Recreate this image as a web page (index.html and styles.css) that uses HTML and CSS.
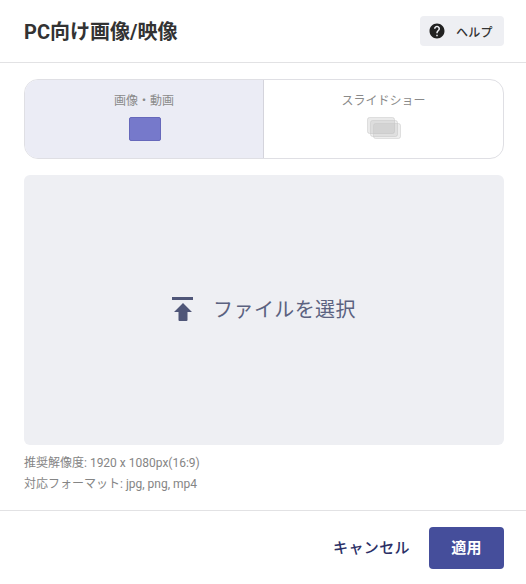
FILE: index.html
```html
<!DOCTYPE html>
<html lang="ja">
<head>
  <meta charset="UTF-8">
  <title>PC向け画像/映像</title>
  <link rel="stylesheet" href="styles.css">
</head>
<body>
  <div class="modal">
    <!-- Header -->
    <div class="modal-header">
      <h1>PC向け画像/映像</h1>
      <button class="help-button">
        <svg class="help-icon" viewBox="0 0 24 24" width="18" height="18">
          <path fill="#212121" d="M12 2C6.48 2 2 6.48 2 12s4.48 10 10 10 10-4.48 10-10S17.52 2 12 2zm1 17h-2v-2h2v2zm2.07-7.75l-.9.92C13.45 12.9 13 13.5 13 15h-2v-.5c0-1.1.45-2.1 1.17-2.83l1.24-1.26c.37-.36.59-.86.59-1.41 0-1.1-.9-2-2-2s-2 .9-2 2H8c0-2.21 1.79-4 4-4s4 1.79 4 4c0 .88-.36 1.68-.93 2.25z"/>
        </svg>
        <span>ヘルプ</span>
      </button>
    </div>

    <!-- Body -->
    <div class="modal-body">
      <div class="type-tabs">
        <div class="type-tab active">
          <span class="tab-label">画像・動画</span>
          <span class="single-icon"></span>
        </div>
        <div class="type-tab">
          <span class="tab-label">スライドショー</span>
          <svg class="slide-icon" viewBox="0 0 36 24" width="36" height="24">
            <rect x="1.500" y="0.500" width="27" height="16" rx="2" fill="#b8b8b8" fill-opacity="0.3" stroke="#c8c8c8" stroke-opacity="0.5"/>
            <rect x="4.500" y="3.500" width="27" height="16" rx="2" fill="#b8b8b8" fill-opacity="0.25" stroke="#c8c8c8" stroke-opacity="0.5"/>
            <rect x="7.500" y="6.500" width="27" height="15" rx="2" fill="#b8b8b8" fill-opacity="0.25" stroke="#c8c8c8" stroke-opacity="0.5"/>
          </svg>
        </div>
      </div>

      <div class="file-drop">
        <svg class="upload-icon" viewBox="0 0 21 25" width="21" height="25">
          <rect x="0" y="0" width="21" height="3" fill="#4f5678"/>
          <path fill="#4f5678" d="M11 6 L20 15 H15.500 V23 Q15.500 24 14.500 24 H7.500 Q6.500 24 6.500 23 V15 H2 Z"/>
        </svg>
        <span class="file-label">ファイルを選択</span>
      </div>

      <p class="note">推奨解像度: 1920 x 1080px(16:9)</p>
      <p class="note">対応フォーマット: jpg, png, mp4</p>
    </div>

    <!-- Footer -->
    <div class="modal-footer">
      <button class="cancel-button">キャンセル</button>
      <button class="apply-button">適用</button>
    </div>
  </div>
</body>
</html>
```

FILE: styles.css
```css
/* Modal layout */
body {
  margin: 0;
  background-color: #ffffff;
  font-family: Roboto, "Noto Sans CJK JP", sans-serif;
}

.modal {
  width: 526px;
  height: 584px;
  display: flex;
  flex-direction: column;
  box-sizing: border-box;
}

.modal-header {
  height: 63px;
  box-sizing: border-box;
  padding: 0 22px 0 24px;
  display: flex;
  align-items: center;
  justify-content: space-between;
  border-bottom: 1px solid #e2e2e4;
}

h1 {
  margin: 0 0 2px;
  font-size: 20px;
  font-weight: 700;
  color: #333333;
}

button {
  border: none;
  font-family: inherit;
  cursor: pointer;
}

.help-button {
  width: 84px;
  height: 30px;
  padding: 0 0 0 8px;
  display: flex;
  align-items: center;
  gap: 10px;
  background-color: #eeeff3;
  border-radius: 4px;
  font-size: 12px;
  font-weight: 500;
  letter-spacing: 0.3px;
  color: #333333;
}

.modal-body {
  flex: 1;
  padding: 16px 22px 0 24px;
}

/* Type selector */
.type-tabs {
  display: flex;
  height: 80px;
  box-sizing: border-box;
  border: 1px solid #dfdfe4;
  border-radius: 14px;
  overflow: hidden;
}

.type-tab {
  flex: 1;
  display: flex;
  flex-direction: column;
  align-items: center;
  padding-top: 13px;
  box-sizing: border-box;
}

.type-tab.active {
  flex: 0 0 239px;
  background-color: #ebecf5;
  border-right: 1px solid #d4d4dc;
}

.tab-label {
  font-size: 12px;
  line-height: 17px;
  color: #8a8a8a;
}

.single-icon {
  width: 32px;
  height: 24px;
  margin: 7px 0 0 2px;
  box-sizing: border-box;
  background-color: #7679cb;
  border: 1px solid #6668bb;
  border-radius: 2px;
}

.slide-icon {
  margin-top: 7px;
}

/* File picker */
.file-drop {
  height: 270px;
  margin: 16px 0 10px;
  box-sizing: border-box;
  display: flex;
  align-items: center;
  justify-content: center;
  gap: 20px;
  background-color: #eeeff3;
  border-radius: 6px;
}

.upload-icon {
  margin-bottom: 2px;
}

.file-label {
  margin-bottom: 4px;
  font-size: 20px;
  letter-spacing: 0.4px;
  color: #5b6280;
}

.note {
  margin: 0 0 5px;
  font-size: 12px;
  line-height: 16px;
  color: #858585;
}

/* Footer */
.modal-footer {
  height: 74px;
  box-sizing: border-box;
  padding: 0 22px 0 0;
  display: flex;
  align-items: center;
  justify-content: flex-end;
  gap: 19px;
  border-top: 1px solid #e2e2e4;
}

.cancel-button {
  background: none;
  padding: 0 0 2px;
  font-size: 15px;
  font-weight: 500;
  letter-spacing: 0.4px;
  color: #2b2f66;
}

.apply-button {
  width: 75px;
  height: 42px;
  padding: 0 0 2px;
  background-color: #454e9b;
  border-radius: 4px;
  font-size: 15px;
  font-weight: 700;
  letter-spacing: 0.3px;
  color: #ffffff;
}
```
